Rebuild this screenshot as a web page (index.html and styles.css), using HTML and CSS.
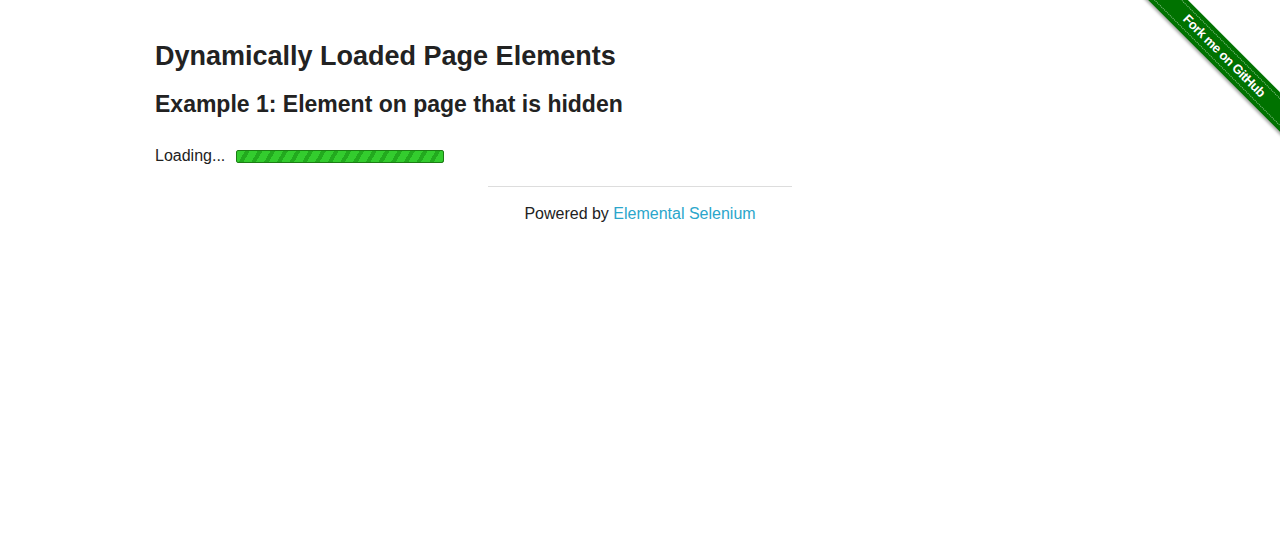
FILE: index.html
```html
<!DOCTYPE html>
<html>
<head>
<meta charset="utf-8">
<link rel="stylesheet" href="styles.css">
</head>
<body>
<div class="ribbon-wrap">
  <a class="ribbon" href="#"><span class="ribbon-text">Fork me on GitHub</span></a>
</div>
<div class="row">
  <div class="content">
    <h3 class="title">Dynamically Loaded Page Elements</h3>
    <h4 class="subtitle">Example 1: Element on page that is hidden</h4>
    <div class="loading">
      <span>Loading...</span>
      <span class="bar"></span>
    </div>
  </div>
</div>
<div class="footer">
  <hr class="rule">
  <div class="powered">Powered by <a href="#">Elemental Selenium</a></div>
</div>
</body>
</html>
```
FILE: styles.css
```css
html, body {
  margin: 0;
  padding: 0;
  background: #fff;
  color: #222;
  font-family: "Liberation Sans", Arial, sans-serif;
  font-size: 16px;
  overflow: hidden;
}
.row {
  max-width: 1000px;
  margin: 0 auto;
  padding-top: 38px;
}
.content {
  padding: 0 15px;
}
.title {
  font-size: 27px;
  font-weight: bold;
  line-height: 1.4;
  margin: 0 0 12px 0;
}
.subtitle {
  font-size: 23px;
  font-weight: bold;
  line-height: 1.4;
  margin: 0 0 24px 0;
}
.loading {
  display: flex;
  align-items: center;
  gap: 11px;
  line-height: 24px;
}
.bar {
  display: block;
  width: 206px;
  height: 11px;
  margin-top: 2px;
  border: 1px solid #1c7d14;
  border-radius: 2px;
  background: repeating-linear-gradient(120deg, #33cc2e 0 7px, #22aa1e 7px 11px);
}
.footer {
  width: 304px;
  margin: 18px auto 0;
  text-align: center;
}
.rule {
  border: 0;
  border-top: 1px solid #ddd;
  margin: 0 0 17px 0;
}
.powered {
  line-height: 20px;
}
.powered a {
  color: #2ba6cb;
  text-decoration: none;
}
.ribbon-wrap {
  position: absolute;
  top: 0;
  right: 0;
  width: 149px;
  height: 149px;
  overflow: hidden;
}
.ribbon {
  position: absolute;
  top: 42px;
  left: -17px;
  width: 220px;
  transform: rotate(45deg);
  background: #007200;
  padding: 4px 0;
  text-decoration: none;
  box-shadow: 0 2px 3px rgba(0,0,0,0.35);
}
.ribbon-text {
  display: block;
  color: #fff;
  font-family: "Liberation Sans", Arial, sans-serif;
  font-size: 13px;
  letter-spacing: -0.4px;
  font-weight: bold;
  text-align: center;
  line-height: 18px;
  border-top: 1px dotted rgba(255,255,255,0.55);
  border-bottom: 1px dotted rgba(255,255,255,0.55);
  text-shadow: 0 -1px 0 rgba(0,0,0,0.3);
}
```
